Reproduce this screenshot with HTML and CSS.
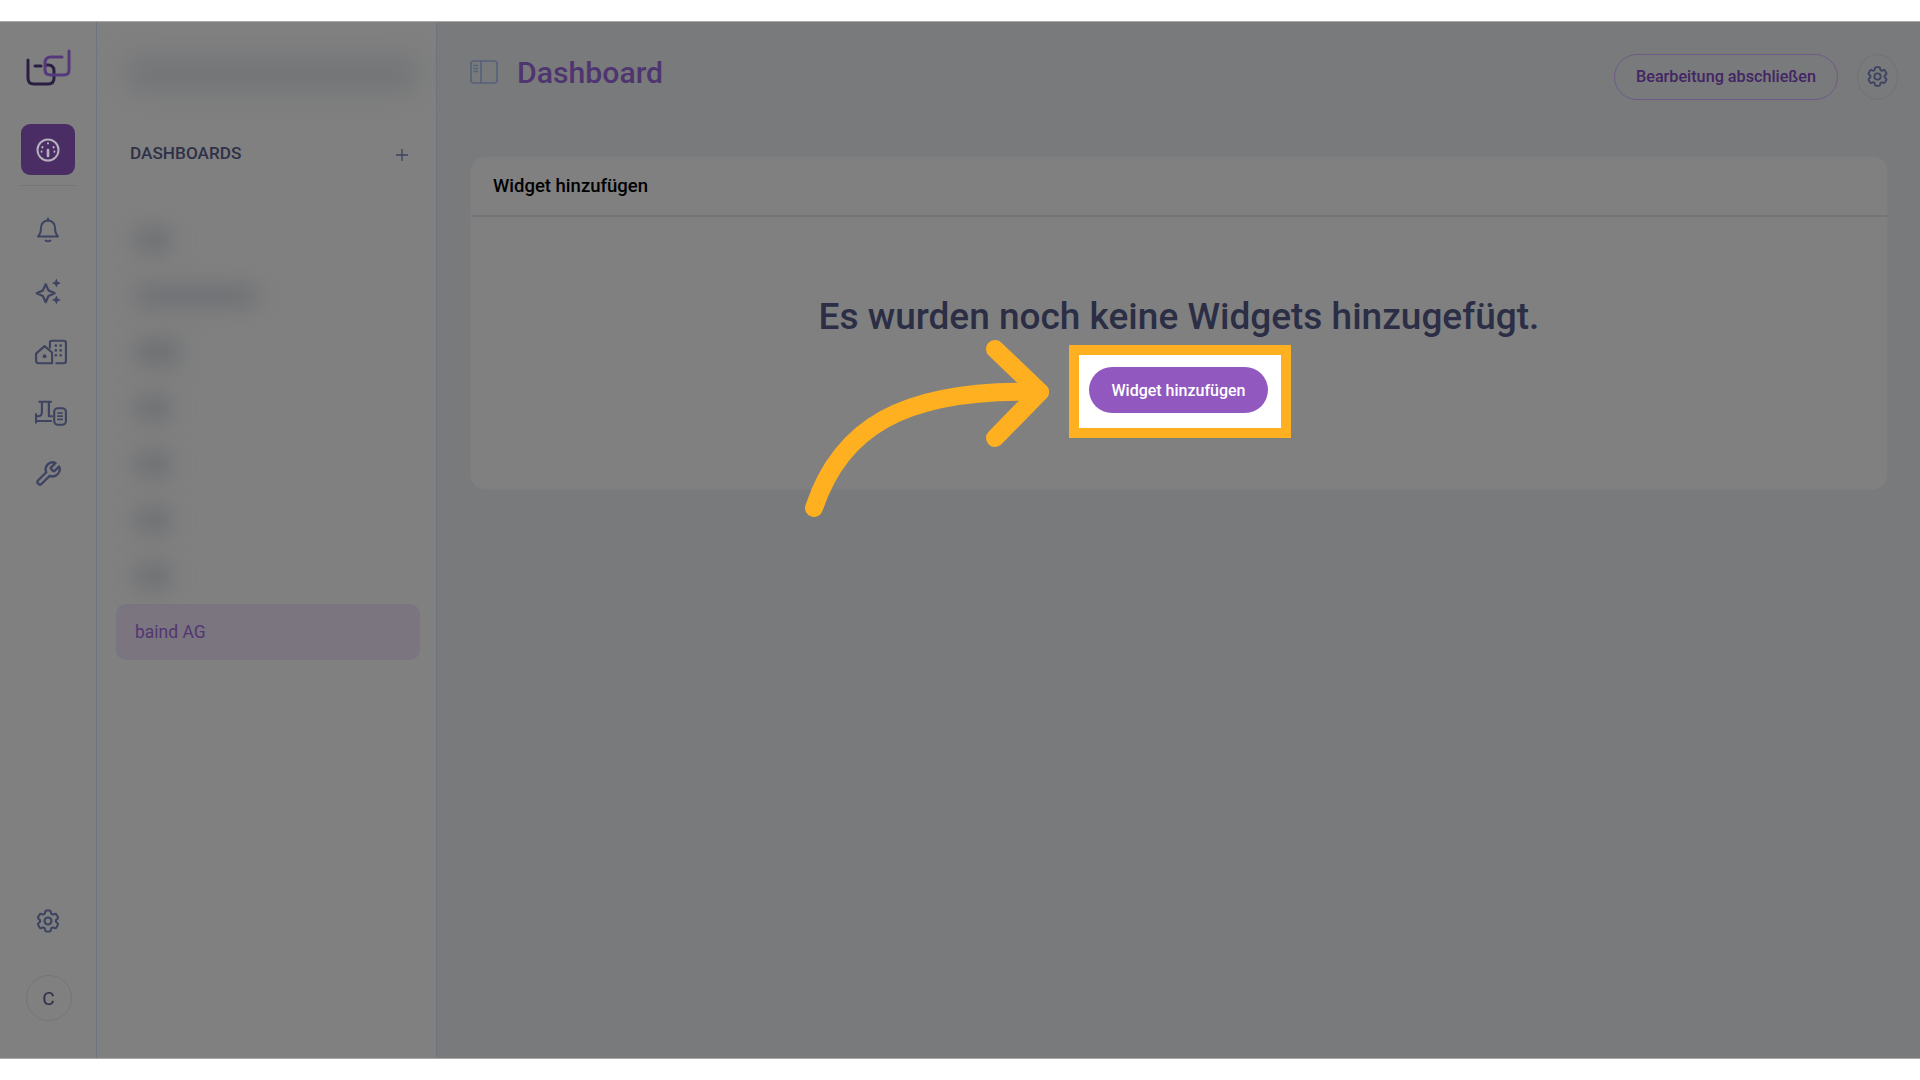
FILE: index.html
```html
<!DOCTYPE html>
<html lang="de">
<head>
<meta charset="utf-8">
<title>Dashboard</title>
<link rel="stylesheet" href="styles.css">
</head>
<body>
<div class="band band-top"></div>
<div class="app">
  <nav class="rail">
    <svg class="logo" viewBox="0 0 48 40" fill="none" stroke-width="3" stroke-linecap="round" stroke-linejoin="round">
      <path class="logo-dark" d="M4 13v18q0 6 6 6h14q6 0 6-6v-7q0-6-6-6h-2M11 19h6"/>
      <path class="logo-light" d="M38 10H27q-6 0-6 6v7q0 5 6 5h13q5 0 5-5V4"/>
    </svg>
    <a class="rail-active">
      <svg viewBox="0 0 24 24" fill="none" stroke-width="2" stroke-linecap="round">
        <circle cx="12" cy="12" r="10.5"/>
        <path d="M12 12v6" stroke-width="2.6"/>
        <path d="M12 5.2v.4M6.4 9v.4M17.6 9v.4M5.6 13.5v.2M18.4 13.5v.2"/>
      </svg>
    </a>
    <div class="rail-divider"></div>
    <div class="rail-icons">
      <a class="rail-icon">
        <svg class="ic-bell" viewBox="0 0 24 26" fill="none" stroke-width="2" stroke-linecap="round" stroke-linejoin="round">
          <path d="M12 3.500a7 7 0 0 0-7 7c0 6-3 9-3 9h20s-3-3-3-9a7 7 0 0 0-7-7Z"/>
          <path d="M12 1.500v2M9.500 23.500q2.500 1.500 5 0"/>
        </svg>
      </a>
      <a class="rail-icon">
        <svg class="ic-spark" viewBox="0 0 24 24" fill="none" stroke-width="2" stroke-linejoin="round">
          <path d="M9.500 5.500 12 11l5.500 2.500L12 16l-2.500 5.500L7 16l-5.500-2.500L7 11Z"/>
          <path class="ic-fill" d="M19 0.500l1.200 2.800L23 4.500l-2.800 1.200L19 8.500l-1.200-2.800L15 4.500l2.800-1.200ZM19 15.500l1.200 2.800 2.800 1.200-2.800 1.200-1.200 2.800-1.200-2.800-2.800-1.200 2.800-1.200Z" stroke="none"/>
        </svg>
      </a>
      <a class="rail-icon shift">
        <svg class="ic-wide" viewBox="0 0 30 24" fill="none" stroke-width="2" stroke-linecap="round" stroke-linejoin="round">
          <path d="M1 13.500 9 6.500l7 6v10H3.500q-2.500 0-2.500-2.500Z"/>
          <circle class="ic-fill" cx="9" cy="16" r="1.800" stroke="none"/>
          <path d="M14 8V3q0-1.500 1.500-1.500h11.500q2 0 2 2V20.500q0 2-2 2h-7"/>
          <path d="M19.500 6h.1M24 6h.1M19.500 10.500h.1M24 10.500h.1M19.500 15h.1M24 15h.1" stroke-width="2.400"/>
        </svg>
      </a>
      <a class="rail-icon shift">
        <svg class="ic-wide" viewBox="0 0 30 24" fill="none" stroke-width="2" stroke-linecap="round" stroke-linejoin="round">
          <path d="M4 1.500h11M6.500 1.500V11q0 4-4 4H1M13 1.500V15h3M1 19.500h14"/>
          <path d="M1 13v8"/>
          <rect x="18" y="7.500" width="11" height="15.500" rx="3.500"/>
          <path d="M21.500 12h4M21.500 15h4M21.500 18h4" stroke-width="1.600"/>
        </svg>
      </a>
      <a class="rail-icon">
        <svg class="ic-wrench" viewBox="0 0 24 24" fill="none" stroke-width="2" stroke-linecap="round" stroke-linejoin="round">
          <path d="M14.700 6.300a1 1 0 0 0 0 1.400l1.600 1.600a1 1 0 0 0 1.400 0l3.770-3.770a6 6 0 0 1-7.940 7.940l-6.910 6.910a2.120 2.120 0 0 1-3-3l6.910-6.910a6 6 0 0 1 7.940-7.940l-3.760 3.760z"/>
        </svg>
      </a>
    </div>
    <a class="rail-icon rail-gear">
      <svg class="ic-gear" viewBox="0 0 24 24" fill="none" stroke-width="1.800" stroke-linecap="round" stroke-linejoin="round">
        <path d="M9.594 3.940c.09-.542.56-.94 1.110-.94h2.593c.55 0 1.020.398 1.110.94l.213 1.281c.063.374.313.686.645.870.074.040.147.083.22.127.325.196.72.257 1.075.124l1.217-.456a1.125 1.125 0 0 1 1.370.49l1.296 2.247a1.125 1.125 0 0 1-.26 1.431l-1.003.827c-.293.241-.438.613-.43.992a7.723 7.723 0 0 1 0 .255c-.008.378.137.75.43.991l1.004.827c.424.35.534.955.26 1.430l-1.298 2.247a1.125 1.125 0 0 1-1.369.491l-1.217-.456c-.355-.133-.75-.072-1.076.124a6.470 6.470 0 0 1-.22.128c-.331.183-.581.495-.644.869l-.213 1.281c-.09.543-.56.94-1.110.94h-2.594c-.55 0-1.019-.398-1.110-.94l-.213-1.281c-.062-.374-.312-.686-.644-.87a6.520 6.520 0 0 1-.22-.127c-.325-.196-.72-.257-1.076-.124l-1.217.456a1.125 1.125 0 0 1-1.369-.49l-1.297-2.247a1.125 1.125 0 0 1 .26-1.431l1.004-.827c.292-.24.437-.613.43-.991a6.932 6.932 0 0 1 0-.255c.007-.38-.138-.751-.43-.992l-1.004-.827a1.125 1.125 0 0 1-.26-1.430l1.297-2.247a1.125 1.125 0 0 1 1.370-.491l1.216.456c.356.133.751.072 1.076-.124.072-.044.146-.086.22-.128.332-.183.582-.495.644-.869l.214-1.280Z"/>
        <circle cx="12" cy="12" r="3"/>
      </svg>
    </a>
    <div class="avatar">C</div>
  </nav>

  <aside class="panel">
    <div class="blur blur-search"></div>
    <div class="panel-head">
      <span class="panel-title">DASHBOARDS</span>
      <svg class="panel-plus" viewBox="0 0 12 12" fill="none" stroke-width="1.300"><path d="M6 0v12M0 6h12"/></svg>
    </div>
    <ul class="dash-list">
      <li class="dash-item"><span class="blur blur-a"></span></li>
      <li class="dash-item"><span class="blur blur-b"></span></li>
      <li class="dash-item"><span class="blur blur-c"></span></li>
      <li class="dash-item"><span class="blur blur-a"></span></li>
      <li class="dash-item"><span class="blur blur-a"></span></li>
      <li class="dash-item"><span class="blur blur-a"></span></li>
      <li class="dash-item"><span class="blur blur-a"></span></li>
      <li class="dash-item dash-active">baind AG</li>
    </ul>
  </aside>

  <main class="main">
    <header class="topbar">
      <div class="topbar-left">
        <svg class="ic-toggle" viewBox="0 0 28 24" fill="none" stroke-width="1.600" stroke-linecap="round">
          <rect x="1" y="1" width="26" height="22" rx="3"/>
          <path d="M11 1v22M4 5.500h3.500M4 8.500h3.500M4 11.500h3.500"/>
        </svg>
        <h1 class="page-title">Dashboard</h1>
      </div>
      <div class="topbar-right">
        <button class="btn-outline">Bearbeitung abschließen</button>
        <button class="btn-gear">
          <svg class="ic-gear" viewBox="0 0 24 24" fill="none" stroke-width="1.800" stroke-linecap="round" stroke-linejoin="round">
            <path d="M9.594 3.940c.09-.542.56-.94 1.110-.94h2.593c.55 0 1.020.398 1.110.94l.213 1.281c.063.374.313.686.645.870.074.040.147.083.22.127.325.196.72.257 1.075.124l1.217-.456a1.125 1.125 0 0 1 1.370.49l1.296 2.247a1.125 1.125 0 0 1-.26 1.431l-1.003.827c-.293.241-.438.613-.43.992a7.723 7.723 0 0 1 0 .255c-.008.378.137.75.43.991l1.004.827c.424.35.534.955.26 1.430l-1.298 2.247a1.125 1.125 0 0 1-1.369.491l-1.217-.456c-.355-.133-.75-.072-1.076.124a6.470 6.470 0 0 1-.22.128c-.331.183-.581.495-.644.869l-.213 1.281c-.09.543-.56.94-1.110.94h-2.594c-.55 0-1.019-.398-1.110-.94l-.213-1.281c-.062-.374-.312-.686-.644-.87a6.520 6.520 0 0 1-.22-.127c-.325-.196-.72-.257-1.076-.124l-1.217.456a1.125 1.125 0 0 1-1.369-.49l-1.297-2.247a1.125 1.125 0 0 1 .26-1.431l1.004-.827c.292-.24.437-.613.43-.991a6.932 6.932 0 0 1 0-.255c.007-.38-.138-.751-.43-.992l-1.004-.827a1.125 1.125 0 0 1-.26-1.430l1.297-2.247a1.125 1.125 0 0 1 1.370-.491l1.216.456c.356.133.751.072 1.076-.124.072-.044.146-.086.22-.128.332-.183.582-.495.644-.869l.214-1.280Z"/>
            <circle cx="12" cy="12" r="3"/>
          </svg>
        </button>
      </div>
    </header>

    <section class="card">
      <div class="card-head">Widget hinzufügen</div>
      <div class="card-body">
        <h2 class="empty-title">Es wurden noch keine Widgets hinzugefügt.</h2>
        <div class="spotlight">
          <button class="btn-primary">Widget hinzufügen</button>
        </div>
      </div>
    </section>
  </main>
</div>
<div class="band band-bottom"></div>

<svg class="arrow" viewBox="0 0 1920 1080" fill="none">
  <path d="M814 508C840 430 900 388 1040 392"/>
  <path d="M995 349 1040 392 995 438"/>
</svg>
</body>
</html>
```
FILE: styles.css
```css
* { box-sizing: border-box; }

html, body {
  margin: 0;
  height: 1080px;
  overflow: hidden;
}

body {
  position: relative;
  display: flex;
  flex-direction: column;
  background: #fff;
  font-family: Roboto, "Liberation Sans", sans-serif;
  color: #2e3147;
}

.band { background: #fff; flex: none; }
.band-top { height: 21px; }
.band-bottom { height: 21px; }

.app {
  flex: none;
  height: 1038px;
  display: flex;
  position: relative;
  background: #808080;
  border-top: 1px solid #a9a9a9;
  border-bottom: 1px solid #a9a9a9;
}

/* Icon rail */
.rail {
  flex: none;
  width: 97px;
  padding: 25px 0 37px;
  display: flex;
  flex-direction: column;
  align-items: center;
  border-right: 1px solid #6f7481;
}

.logo { width: 48px; height: 40px; display: block; }
.logo-dark { stroke: #2a1f42; }
.logo-light { stroke: #543a7c; }

.rail-active {
  width: 54px;
  height: 51px;
  margin-top: 37px;
  border-radius: 9px;
  background: #4b2d66;
  display: flex;
  align-items: center;
  justify-content: center;
}
.rail-active svg { width: 24px; height: 24px; stroke: #b5b0bb; }

.rail-divider {
  width: 54px;
  height: 1px;
  margin-top: 10px;
  background: #727479;
}

.rail-icons {
  margin-top: 14px;
  display: flex;
  flex-direction: column;
}

.rail-icon {
  width: 54px;
  height: 60.8px;
  display: flex;
  align-items: center;
  justify-content: center;
}
.rail-icon.shift { padding-left: 6px; }
.rail-icon svg, .btn-gear svg { stroke: #3d4360; }
.rail-icon .ic-fill { fill: #3d4360; }

.ic-bell { width: 24px; height: 28px; }
.ic-spark { width: 27px; height: 27px; }
.ic-wide { width: 32px; height: 26px; }
.ic-wrench { width: 28px; height: 28px; }
.ic-gear { width: 28px; height: 28px; }

.rail-gear { margin-top: auto; }

.avatar {
  width: 46px;
  height: 46px;
  margin: 24px 0 0 1px;
  border: 1px solid #757575;
  border-radius: 50%;
  display: flex;
  align-items: center;
  justify-content: center;
  font-size: 19px;
  color: #2e3147;
}

/* Dashboards panel */
.panel {
  flex: none;
  width: 340px;
  padding: 27px 16px 0 19px;
  border-right: 1px solid #6f7481;
}

.blur { display: block; background: #6c6e72; filter: blur(11px); }

.blur-search {
  width: 288px;
  height: 32px;
  margin: 9px 0 0 12px;
  background: #717376;
  filter: blur(14px);
}

.panel-head {
  display: flex;
  align-items: center;
  justify-content: space-between;
  margin-top: 51px;
  padding: 0 12px 0 14px;
  height: 24px;
}
.panel-title { font-size: 17.200px; font-weight: 500; color: #2e3147; }
.panel-plus { width: 12px; height: 12px; stroke: #3d4360; margin-top: 3px; }

.dash-list { list-style: none; margin: 47px 0 0; padding: 0; }

.dash-item {
  height: 56px;
  display: flex;
  align-items: center;
  padding-left: 20px;
  border-radius: 10px;
  font-size: 17.500px;
  color: #533574;
}
.dash-active { background: #7a757e; padding-left: 19px; }

.blur-a { width: 34px; height: 24px; }
.blur-b { width: 120px; height: 20px; }
.blur-c { width: 44px; height: 24px; }

/* Main */
.main {
  flex: 1;
  min-width: 0;
  padding: 0 22px 0 34px;
  background: #797a7b;
}

.topbar {
  height: 135px;
  padding-top: 32px;
  display: flex;
  justify-content: space-between;
  align-items: flex-start;
}

.topbar-left {
  height: 36px;
  display: flex;
  align-items: center;
  gap: 19px;
  margin-left: -1px;
}

.ic-toggle { width: 28px; height: 24px; stroke: #56607a; }

.page-title {
  margin: 0;
  font-size: 30.200px;
  font-weight: 500;
  color: #4f3570;
}

.topbar-right { display: flex; gap: 19px; }

.btn-outline {
  width: 224px;
  height: 46px;
  padding: 0 0 2px;
  background: transparent;
  border: 1px solid #6f5a8a;
  border-radius: 23px;
  font: 500 16.200px Roboto, "Liberation Sans", sans-serif;
  color: #432565;
}

.btn-gear {
  width: 41px;
  height: 46px;
  padding: 0 0 2px;
  background: transparent;
  border: 1px solid #717377;
  border-radius: 50%;
  display: flex;
  align-items: center;
  justify-content: center;
}
.btn-gear .ic-gear { width: 25px; height: 25px; }

.card {
  margin-right: 11px;
  background: #808080;
  border-radius: 14px;
  box-shadow: 0 0 0 1px #7c7c7c;
}

.card-head {
  height: 60px;
  padding-left: 22px;
  display: flex;
  align-items: center;
  border-bottom: 2px solid #737478;
  font-size: 18.500px;
  font-weight: 500;
  color: #000;
}

.card-body {
  height: 272px;
  padding-top: 76px;
  display: flex;
  flex-direction: column;
  align-items: center;
}

.empty-title {
  margin: 0 0 4px;
  height: 48px;
  line-height: 48px;
  font-size: 37px;
  font-weight: 500;
  color: #2b2e45;
}

.spotlight {
  width: 222px;
  height: 93px;
  margin-left: 2px;
  padding: 12px 12px 15px 10px;
  background: #fff;
  border: 10px solid #ffb020;
}

.btn-primary {
  display: block;
  width: 179px;
  height: 46px;
  padding: 0;
  border: 0;
  border-radius: 23px;
  background: #9159bf;
  font: 500 16px Roboto, "Liberation Sans", sans-serif;
  color: #fff;
}

/* Annotation arrow drawn over the page */
.arrow {
  position: absolute;
  left: 0;
  top: 0;
  width: 1920px;
  height: 1080px;
  pointer-events: none;
}
.arrow path {
  stroke: #ffb020;
  stroke-width: 18;
  stroke-linecap: round;
  stroke-linejoin: round;
}
```
